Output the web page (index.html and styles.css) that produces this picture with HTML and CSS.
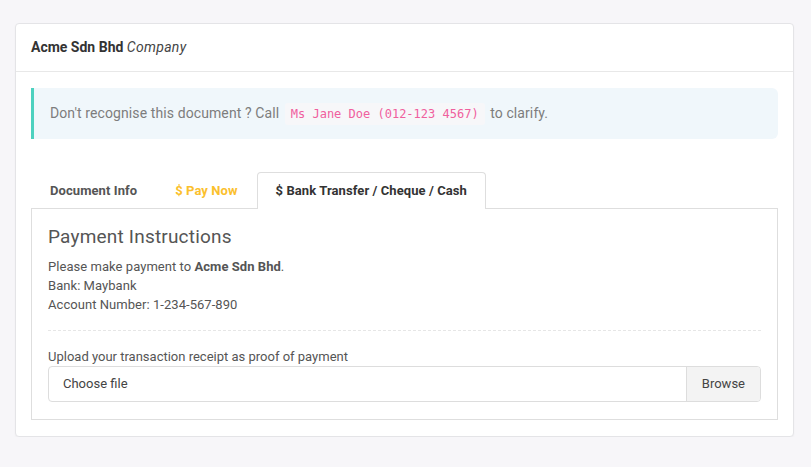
FILE: index.html
```html
<!DOCTYPE html>
<html>
<head>
<meta charset="utf-8">
<link rel="stylesheet" href="styles.css">
</head>
<body>
<div class="card">
  <div class="card-header"><strong>Acme Sdn Bhd</strong> <em>Company</em></div>
  <div class="card-body">
    <div class="alert">Don't recognise this document ? Call <code>Ms Jane Doe (012-123 4567)</code> to clarify.</div>
    <ul class="tabs">
      <li class="tab">Document Info</li>
      <li class="tab pay">$ Pay Now</li>
      <li class="tab active">$ Bank Transfer / Cheque / Cash</li>
    </ul>
    <div class="panel">
      <h3 class="title">Payment Instructions</h3>
      <p class="info">Please make payment to <b>Acme Sdn Bhd</b>.<br>Bank: Maybank<br>Account Number: 1-234-567-890</p>
      <hr class="sep">
      <label class="label">Upload your transaction receipt as proof of payment</label>
      <div class="file">
        <span class="file-name">Choose file</span>
        <span class="browse">Browse</span>
      </div>
    </div>
  </div>
</div>
</body>
</html>
```
FILE: styles.css
```css
html, body { margin: 0; padding: 0; }
body {
  background: #f7f6f9;
  font-family: Roboto, "Liberation Sans", sans-serif;
  color: #555;
  padding: 23px 17px 0 15px;
}
.card {
  background: #fff;
  border: 1px solid #e4e4e7;
  border-radius: 4px;
  box-shadow: 0 1px 2px rgba(0,0,0,0.04);
}
.card-header {
  height: 47px;
  line-height: 47px;
  padding: 0 15px;
  border-bottom: 1px solid #e8e8e8;
  font-size: 14px;
  color: #333;
}
.card-header strong { font-weight: 700; }
.card-header em { color: #444; letter-spacing: 0.3px; }
.card-body { padding: 16px 15px 16px 15px; }
.alert {
  background: #f0f7fb;
  border-left: 3px solid #4dd1bf;
  border-radius: 0 6px 6px 0;
  height: 51px;
  line-height: 51px;
  padding: 0 0 0 16px;
  font-size: 14px;
  letter-spacing: 0.1px;
  color: #7d7d7d;
}
.alert code {
  font-family: "DejaVu Sans Mono", monospace;
  font-size: 12px;
  letter-spacing: 0;
  color: #f0609e;
  background: #f7f7f9;
  padding: 4px 6px;
  border-radius: 3px;
  margin: 0 2px;
}
.tabs {
  list-style: none;
  margin: 33px 0 0 0;
  padding: 0;
  display: flex;
  height: 36px;
  border-bottom: 1px solid #dedede;
}
.tab {
  padding: 0 18px;
  line-height: 36px;
  font-size: 13px;
  font-weight: 700;
  letter-spacing: 0.08px;
  color: #555;
  border: 1px solid transparent;
  border-bottom: none;
}
.tab.pay { color: #fbc02d; }
.tab.active {
  background: #fff;
  border-color: #dedede;
  border-radius: 4px 4px 0 0;
  color: #333;
  margin-bottom: -1px;
  height: 36px;
  line-height: 36px;
}
.panel {
  border: 1px solid #dedede;
  border-top: none;
  padding: 17px 16px 17px 16px;
}
.title {
  margin: 0 0 9px 0;
  font-size: 19px;
  letter-spacing: 0.2px;
  font-weight: 400;
  line-height: 22px;
  color: #555;
}
.info {
  margin: 0;
  font-size: 13px;
  letter-spacing: 0.05px;
  line-height: 19px;
  color: #555;
}
.info b { font-weight: 700; }
.sep {
  border: none;
  border-top: 1px dashed #e6e6e6;
  margin: 16px 0 17px 0;
}
.label {
  display: block;
  font-size: 13px;
  line-height: 18px;
  margin-bottom: 0;
  color: #555;
}
.file {
  display: flex;
  height: 34px;
  border: 1px solid #ddd;
  border-radius: 4px;
  font-size: 13px;
  color: #444;
  line-height: 34px;
  overflow: hidden;
}
.file-name { flex: 1; padding-left: 14px; }
.browse {
  background: #f3f3f3;
  border-left: 1px solid #ddd;
  padding: 0 15px;
}
```
